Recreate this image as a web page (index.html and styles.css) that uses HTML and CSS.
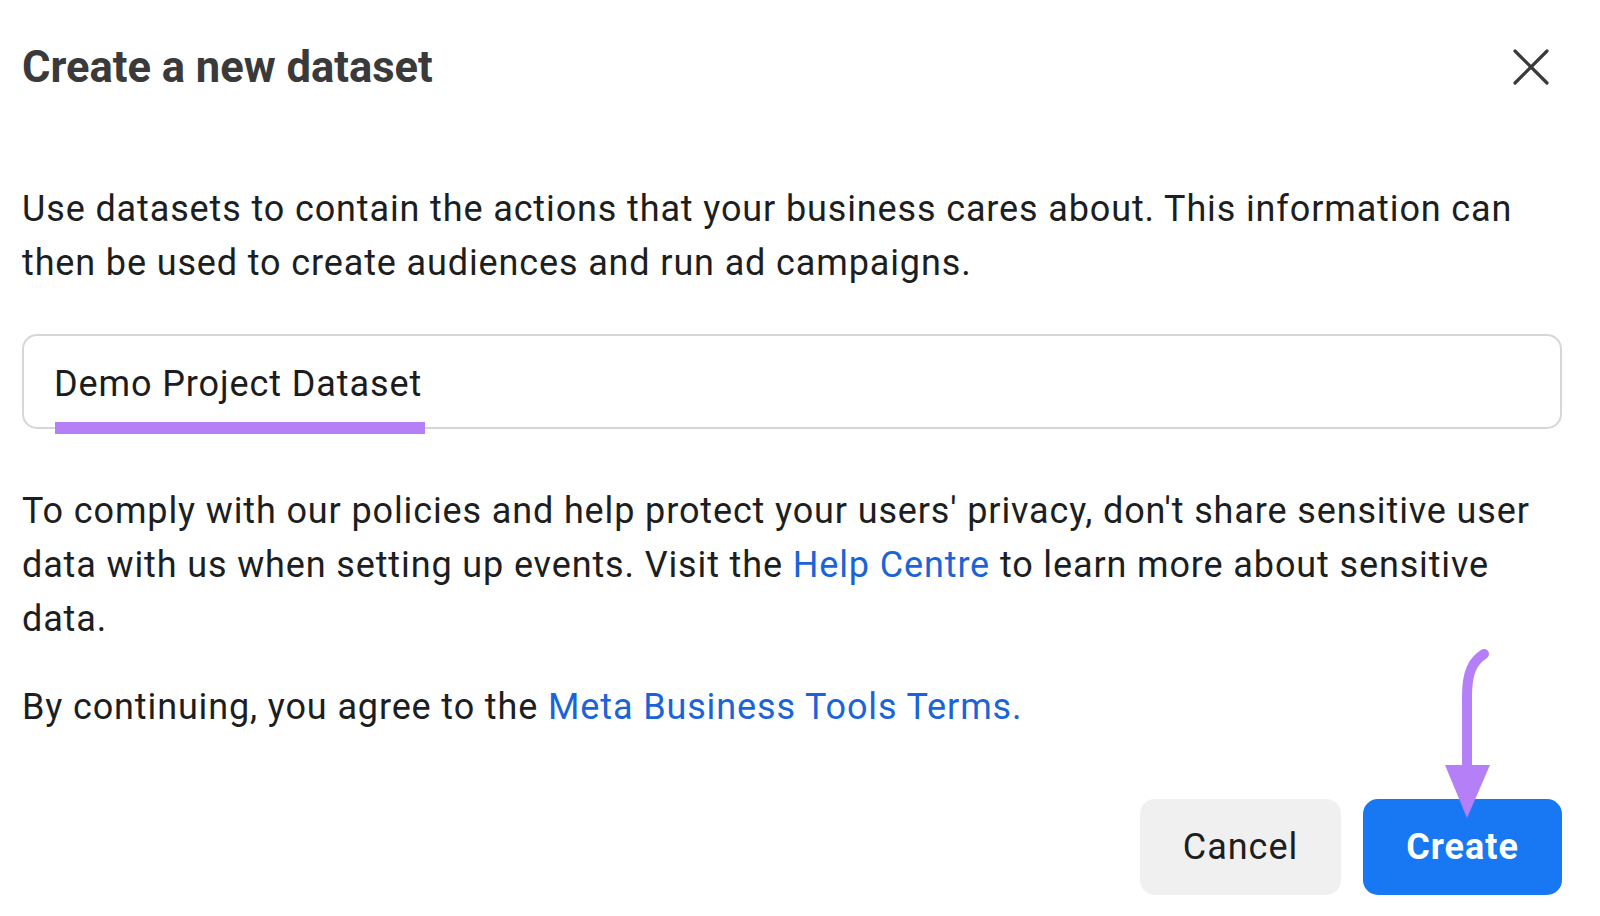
FILE: index.html
```html
<!DOCTYPE html>
<html lang="en">
<head>
<meta charset="utf-8">
<title>Create a new dataset</title>
<link rel="stylesheet" href="styles.css">
</head>
<body>
<div class="dialog">
  <div class="header">
    <h1 class="title">Create a new dataset</h1>
    <button class="close" aria-label="Close">
      <svg width="36" height="36" viewBox="0 0 36 36"><path d="M2 2L34 34M34 2L2 34" stroke="#3a3a3a" stroke-width="3.2" stroke-linecap="round" fill="none"/></svg>
    </button>
  </div>
  <p class="text intro">Use datasets to contain the actions that your business cares about. This information can<br>then be used to create audiences and run ad campaigns.</p>
  <div class="field">
    <span class="field-value">Demo Project Dataset</span>
    <span class="highlight"></span>
  </div>
  <p class="text privacy">To comply with our policies and help protect your users' privacy, don't share sensitive user<br>data with us when setting up events. Visit the <a href="#" class="link">Help Centre</a> to learn more about sensitive<br>data.</p>
  <p class="text terms">By continuing, you agree to the <a href="#" class="link">Meta Business Tools Terms.</a></p>
  <div class="actions">
    <button class="btn btn-cancel">Cancel</button>
    <button class="btn btn-create">Create</button>
  </div>
  <svg class="arrow" width="60" height="185" viewBox="0 0 60 185">
    <path d="M44 14 C33 21 27 32 27 56 L27 130" stroke="#b57ff8" stroke-width="10" stroke-linecap="round" fill="none"/>
    <polygon points="5,125 50,125 27,178" fill="#b57ff8"/>
  </svg>
</div>
</body>
</html>
```

FILE: styles.css
```css
* { box-sizing: border-box; }
html, body {
  margin: 0;
  padding: 0;
  background: #ffffff;
}
body {
  font-family: Roboto, "Noto Sans", "Liberation Sans", sans-serif;
  color: #1c1e21;
}
.dialog {
  position: relative;
  width: 1600px;
  height: 916px;
  padding: 42px 38px 0 22px;
}
.header {
  display: flex;
  align-items: center;
  justify-content: space-between;
  height: 52px;
}
.title {
  margin: 0;
  font-size: 43.5px;
  line-height: 52px;
  font-weight: 700;
  color: #3a3a3a;
}
.close {
  border: 0;
  background: none;
  padding: 0;
  width: 36px;
  height: 36px;
  margin-right: 13px;
  margin-top: -2px;
  display: flex;
}
.text {
  margin: 0;
  font-size: 36px;
  line-height: 54px;
  letter-spacing: 0.87px;
  white-space: nowrap;
}
.intro {
  margin-top: 88px;
}
.field {
  position: relative;
  margin-top: 44px;
  height: 95px;
  border: 2px solid #d6d6d6;
  border-radius: 15px;
  padding: 21px 0 0 30px;
  font-size: 36px;
  line-height: 54px;
  letter-spacing: 0.9px;
  color: #1c1c1c;
}
.highlight {
  position: absolute;
  left: 31px;
  top: 86px;
  width: 370px;
  height: 12px;
  background: #b57ff8;
}
.privacy {
  margin-top: 55px;
}
.terms {
  margin-top: 34px;
}
.link {
  color: #1b64d8;
  text-decoration: none;
}
.actions {
  display: flex;
  justify-content: flex-end;
  gap: 22px;
  margin-top: 65px;
}
.btn {
  height: 96px;
  border: 0;
  border-radius: 15px;
  font-family: Roboto, "Noto Sans", "Liberation Sans", sans-serif;
  font-size: 36px;
  letter-spacing: 1px;
  padding: 0;
}
.btn-cancel {
  width: 201px;
  background: #f0f0f0;
  color: #1c1e21;
}
.btn-create {
  width: 199px;
  background: #1877f2;
  color: #ffffff;
  font-weight: 700;
}
.arrow {
  position: absolute;
  left: 1440px;
  top: 640px;
}
```
